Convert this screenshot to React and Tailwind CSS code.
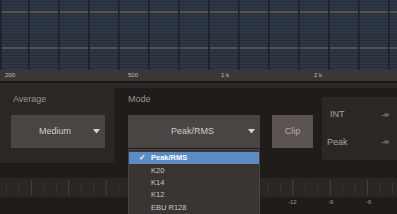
import React from 'react';

const font = { fontFamily: '"Liberation Sans", Arial, sans-serif' };

// spectrum grid behind the analyser
const SpectrumGrid = () => {
    const rows = [];
    for (let y = 1; y < 70; y += 3) rows.push(y);
    const cols = [0];
    for (let x = 28; x < 397; x += 30) cols.push(x);
    return (
        <svg width="397" height="70" className="block">
            <rect width="397" height="70" fill="#2e3744" />
            {rows.map((y) => (
                <rect key={y} x="0" y={y} width="397" height="1" fill="#262e39" />
            ))}
            <rect x="0" y="11" width="397" height="2" fill="#5b534a" />
            <rect x="0" y="47" width="397" height="2" fill="#5b534a" />
            {cols.map((x) => (
                <rect key={x} x={x} y="0" width="1.5" height="70" fill="#1b2029" />
            ))}
        </svg>
    );
};

// level meter scale at the bottom
const MeterScale = () => {
    const ticks = [];
    for (let i = 0; i < 32; i++) ticks.push(6 + i * 12.45);
    return (
        <svg width="397" height="19" className="block">
            <rect width="397" height="19" fill="#2a2624" />
            {ticks.map((x, i) => (
                <rect
                    key={i}
                    x={x}
                    y={i % 3 === 2 ? 2 : 4}
                    width="1"
                    height={i % 3 === 2 ? 15 : 12}
                    fill={i % 3 === 2 ? '#48423e' : '#3a3532'}
                />
            ))}
        </svg>
    );
};

const Caret = () => (
    <svg width="7" height="5" viewBox="0 0 7 5" className="block">
        <path d="M0 0 L7 0 L3.5 4.5 Z" fill="#d8d2cc" />
    </svg>
);

const menuItems = ['K20', 'K14', 'K12', 'EBU R128'];

export default function App() {
    return (
        <div className="w-[397px] h-[214px] overflow-hidden relative bg-[#1f1c1a] flex flex-col" style={font}>
            <SpectrumGrid />

            {/* frequency axis */}
            <div className="h-[11px] bg-[#3b3734] relative text-[6px] leading-[11px] text-[#c4bdb6]">
                <span className="absolute left-[5px]">200</span>
                <span className="absolute left-[128px]">500</span>
                <span className="absolute left-[221px]">1 k</span>
                <span className="absolute left-[314px]">2 k</span>
            </div>
            <div className="h-[2px] bg-[#191715]" />

            {/* controls */}
            <div className="h-[95px] flex">
                <div className="w-[115px] h-[80px] bg-[#2b2725] flex flex-col pl-[11px] pr-[10px]">
                    <div className="text-[9px] text-[#9a948e] pl-[2px] pt-[10px] h-[32px]">Average</div>
                    <div className="h-[33px] bg-[#4a4542] flex items-center pl-[28px] pr-[5px] justify-between">
                        <span className="text-[9px] text-[#d2ccc6]">Medium</span>
                        <Caret />
                    </div>
                </div>
                <div className="flex-1 border-t-[5px] border-[#2b2725] flex">
                    <div className="w-[207px] pl-[13px] flex flex-col">
                        <div className="text-[9px] text-[#9a948e] pt-[5px] h-[27px]">Mode</div>
                        <div className="flex gap-[12px]">
                            <div className="w-[132px] h-[33px] bg-[#4a4542] flex items-center pl-[43px] pr-[5px] justify-between">
                                <span className="text-[9px] text-[#d2ccc6]">Peak/RMS</span>
                                <Caret />
                            </div>
                            <div className="w-[41px] h-[33px] bg-[#5a5350] flex items-center justify-center">
                                <span className="text-[9px] text-[#b8b0aa]">Clip</span>
                            </div>
                        </div>
                    </div>
                    <div className="flex-1 pt-[9px]">
                        <div className="h-[63px] bg-[#2a2725] flex flex-col justify-around pl-[5px] pr-[8px] py-[4px]">
                            <div className="flex justify-between items-center pl-[3px]">
                                <span className="text-[9px] text-[#aaa39d]">INT</span>
                                <span className="text-[7px] text-[#bdb6af]">-∞</span>
                            </div>
                            <div className="flex justify-between items-center">
                                <span className="text-[9px] text-[#aaa39d]">Peak</span>
                                <span className="text-[7px] text-[#bdb6af]">-∞</span>
                            </div>
                        </div>
                    </div>
                </div>
            </div>

            <MeterScale />
            <div className="h-[10px] relative text-[6px] leading-[10px] text-[#a09a94]">
                <span className="absolute left-[288px]">-12</span>
                <span className="absolute left-[328px]">-9</span>
                <span className="absolute left-[366px]">-6</span>
            </div>

            {/* open mode menu */}
            <div className="absolute left-[128px] top-[149px] w-[132px] h-[66px] bg-[#3a3532] border border-[#4a4542] pt-[2px] text-[7.5px]">
                <div className="h-[12px] bg-[#5b8cc6] flex items-center pl-[10px] text-white font-bold">
                    <span className="w-[12px]">✓</span>
                    <span>Peak/RMS</span>
                </div>
                {menuItems.map((item) => (
                    <div key={item} className="h-[12.4px] flex items-center pl-[22px] text-[#cdc7c1]">
                        {item}
                    </div>
                ))}
            </div>
        </div>
    );
}
